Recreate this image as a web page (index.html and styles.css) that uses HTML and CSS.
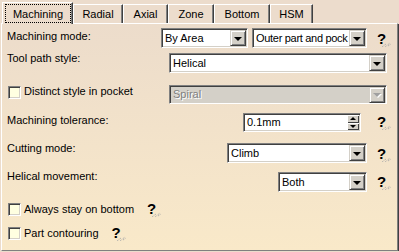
FILE: index.html
```html
<!DOCTYPE html>
<html lang="en">
  <head>
    <meta charset="UTF-8" />
    <title>Machining</title>
    <link rel="stylesheet" href="styles.css">
  </head>
  <body>
    <div class="dialog">
      <!-- tab strip -->
      <div class="tabs">
        <div class="tab active"><span class="focus">Machining</span></div>
        <div class="tab tab-radial">Radial</div>
        <div class="tab tab-axial">Axial</div>
        <div class="tab tab-zone">Zone</div>
        <div class="tab tab-bottom">Bottom</div>
        <div class="tab tab-hsm">HSM</div>
      </div>

      <div class="panel">
        <div class="row r1">
          <span class="label">Machining mode:</span>
          <div class="combo combo-mode push"><span class="value">By Area</span><span class="arrow"></span></div>
          <div class="combo combo-area"><span class="value">Outer part and pock</span><span class="arrow"></span></div>
          <span class="help">?<svg viewBox="0 0 9 6" width="9" height="6"><path d="M0 6 L4 3 M3 6 L8 2 M6 5 L9 3" stroke="#a8a8a8" stroke-width="1" stroke-dasharray="1 1"/></svg></span>
        </div>

        <div class="row r2">
          <span class="label">Tool path style:</span>
          <div class="combo combo-wide push"><span class="value">Helical</span><span class="arrow"></span></div>
        </div>

        <div class="row r3">
          <label class="check"><span class="box"></span>Distinct style in pocket</label>
          <div class="combo combo-wide disabled push"><span class="value">Spiral</span><span class="arrow"></span></div>
        </div>

        <div class="row r4">
          <span class="label">Machining tolerance:</span>
          <div class="spinner push">
            <span class="value">0.1mm</span>
            <span class="spin"><span class="up"></span><span class="down"></span></span>
          </div>
          <span class="help">?<svg viewBox="0 0 9 6" width="9" height="6"><path d="M0 6 L4 3 M3 6 L8 2 M6 5 L9 3" stroke="#a8a8a8" stroke-width="1" stroke-dasharray="1 1"/></svg></span>
        </div>

        <div class="row r5">
          <span class="label">Cutting mode:</span>
          <div class="combo combo-cut push"><span class="value">Climb</span><span class="arrow"></span></div>
          <span class="help">?<svg viewBox="0 0 9 6" width="9" height="6"><path d="M0 6 L4 3 M3 6 L8 2 M6 5 L9 3" stroke="#a8a8a8" stroke-width="1" stroke-dasharray="1 1"/></svg></span>
        </div>

        <div class="row r6">
          <span class="label">Helical movement:</span>
          <div class="combo combo-helix push"><span class="value">Both</span><span class="arrow"></span></div>
          <span class="help">?<svg viewBox="0 0 9 6" width="9" height="6"><path d="M0 6 L4 3 M3 6 L8 2 M6 5 L9 3" stroke="#a8a8a8" stroke-width="1" stroke-dasharray="1 1"/></svg></span>
        </div>

        <div class="row r7">
          <label class="check"><span class="box"></span>Always stay on bottom</label>
          <span class="help help-near">?<svg viewBox="0 0 9 6" width="9" height="6"><path d="M0 6 L4 3 M3 6 L8 2 M6 5 L9 3" stroke="#a8a8a8" stroke-width="1" stroke-dasharray="1 1"/></svg></span>
        </div>

        <div class="row r8">
          <label class="check"><span class="box"></span>Part contouring</label>
          <span class="help help-near">?<svg viewBox="0 0 9 6" width="9" height="6"><path d="M0 6 L4 3 M3 6 L8 2 M6 5 L9 3" stroke="#a8a8a8" stroke-width="1" stroke-dasharray="1 1"/></svg></span>
        </div>
      </div>
    </div>
  </body>
</html>
```

FILE: styles.css
```css
body {
  margin: 0;
  font-family: "Liberation Sans", Arial, sans-serif;
  font-size: 11px;
  line-height: 13px;
  color: #000;
  background-color: #ecdccc;
}

.dialog {
  width: 398px;
  padding-left: 1px;
}

/* tabs */
.tabs {
  display: flex;
  align-items: flex-end;
  height: 23px;
  padding-left: 1px;
  position: relative;
  z-index: 1;
}
.tab {
  box-sizing: border-box;
  height: 19px;
  padding-top: 3px;
  text-align: center;
  border-top: 1px solid #fff;
  border-left: 1px solid #fff;
  border-right: 1px solid #404040;
  box-shadow: inset -1px 0 #808080;
  background-color: #ecdccc;
}
.tab.active {
  width: 71px;
  height: 22px;
  margin-bottom: -1px;
  padding-top: 1px;
}
.tab .focus {
  display: block;
  box-sizing: border-box;
  height: 19px;
  margin: 0 1px 0 2px;
  padding-top: 3px;
  border: 1px dotted #000;
}
.tab-radial { width: 50px; }
.tab-axial { width: 45px; }
.tab-zone { width: 46px; }
.tab-bottom { width: 56px; }
.tab-hsm { width: 43px; }

/* panel */
.panel {
  box-sizing: border-box;
  width: 397px;
  height: 228px;
  padding: 4px 7px 0 5px;
  border-top: 1px solid #fff;
  border-left: 1px solid #fff;
  border-right: 1px solid #808080;
  border-bottom: 1px solid #808080;
  box-shadow: 1px 1px 0 #404040;
  background: linear-gradient(#ecdccb, #f9e9c9);
}

.row {
  display: flex;
  align-items: flex-start;
}
.r1 { height: 20px; }
.r2 { height: 20px; margin-top: 5px; }
.r3 { height: 19px; margin-top: 12px; }
.r4 { height: 19px; margin-top: 9px; }
.r5 { height: 20px; margin-top: 12px; }
.r6 { height: 20px; margin-top: 8px; }
.r7 { height: 13px; margin-top: 11px; }
.r8 { height: 13px; margin-top: 11px; }

.label { white-space: nowrap; }
.r1 .label { margin-top: 2px; }
.r2 .label { margin-top: -1px; }
.r4 .label { margin-top: 1px; }
.r5 .label { margin-top: -2px; }
.r6 .label { margin-top: -2px; }

.push { margin-left: auto; }

/* combo boxes */
.combo, .spinner {
  box-sizing: border-box;
  display: flex;
  align-items: center;
  height: 20px;
  background-color: #fff;
  border: 1px solid;
  border-color: #808080 #fff #fff #808080;
  box-shadow: inset 1px 1px #404040, inset -1px -1px #d4d0c8;
  padding: 1px;
}
.combo .value, .spinner .value {
  flex: 1;
  padding-left: 2px;
  white-space: nowrap;
  overflow: hidden;
}
.combo .arrow {
  box-sizing: border-box;
  width: 16px;
  height: 16px;
  background-color: #d4d0c8;
  border: 1px solid;
  border-color: #d4d0c8 #404040 #404040 #d4d0c8;
  box-shadow: inset 1px 1px #fff, inset -1px -1px #808080;
  display: flex;
  align-items: center;
  justify-content: center;
}
.combo .arrow::after {
  content: "";
  border-left: 4px solid transparent;
  border-right: 4px solid transparent;
  border-top: 4px solid #000;
  margin-top: 1px;
}
.combo-mode { width: 87px; }
.combo-area { width: 115px; margin-left: 4px; }
.combo-area .value { letter-spacing: -0.3px; }
.combo-wide { width: 218px; margin-right: 3px; }
.combo-cut { width: 140px; margin-top: -1px; }
.combo-helix { width: 89px; }

.combo.disabled {
  height: 19px;
  background-color: #d4d0c8;
  color: #808080;
  text-shadow: 1px 1px #fff;
}
.combo.disabled .arrow::after {
  border-top-color: #a0a0a0;
  filter: drop-shadow(1px 1px 0 #fff);
}

/* spinner */
.spinner {
  width: 118px;
  height: 19px;
  margin-right: 6px;
}
.spin {
  display: flex;
  flex-direction: column;
  width: 12px;
  height: 15px;
}
.spin .up, .spin .down {
  flex: 1;
  display: flex;
  align-items: center;
  justify-content: center;
  background-color: #d4d0c8;
  box-shadow: inset 1px 1px #fff, inset -1px -1px #404040;
}
.spin .up::after {
  content: "";
  border-left: 3px solid transparent;
  border-right: 3px solid transparent;
  border-bottom: 3px solid #000;
}
.spin .down::after {
  content: "";
  border-left: 3px solid transparent;
  border-right: 3px solid transparent;
  border-top: 3px solid #000;
}

/* check boxes */
.check {
  display: flex;
  align-items: flex-start;
  white-space: nowrap;
}
.check .box {
  box-sizing: border-box;
  width: 13px;
  height: 13px;
  margin: 0 3px 0 1px;
  background-color: #ffffe1;
  border: 1px solid;
  border-color: #808080 #fff #fff #808080;
  box-shadow: inset 1px 1px #404040, inset -1px -1px #d4d0c8;
}
.r3 .check .box { margin-top: 1px; }

/* help marks */
.help {
  position: relative;
  width: 13px;
  height: 16px;
  margin-left: 10px;
  font-size: 15px;
  line-height: 16px;
  font-weight: bold;
}
.help svg {
  position: absolute;
  right: -1px;
  bottom: 0;
}
.r1 .help { margin-top: 3px; }
.r4 .help { margin-top: 1px; }
.r5 .help { margin-top: 2px; }
.r6 .help { margin-top: 2px; }
.help-near {
  margin-left: 13px;
  margin-top: -2px;
}
```
